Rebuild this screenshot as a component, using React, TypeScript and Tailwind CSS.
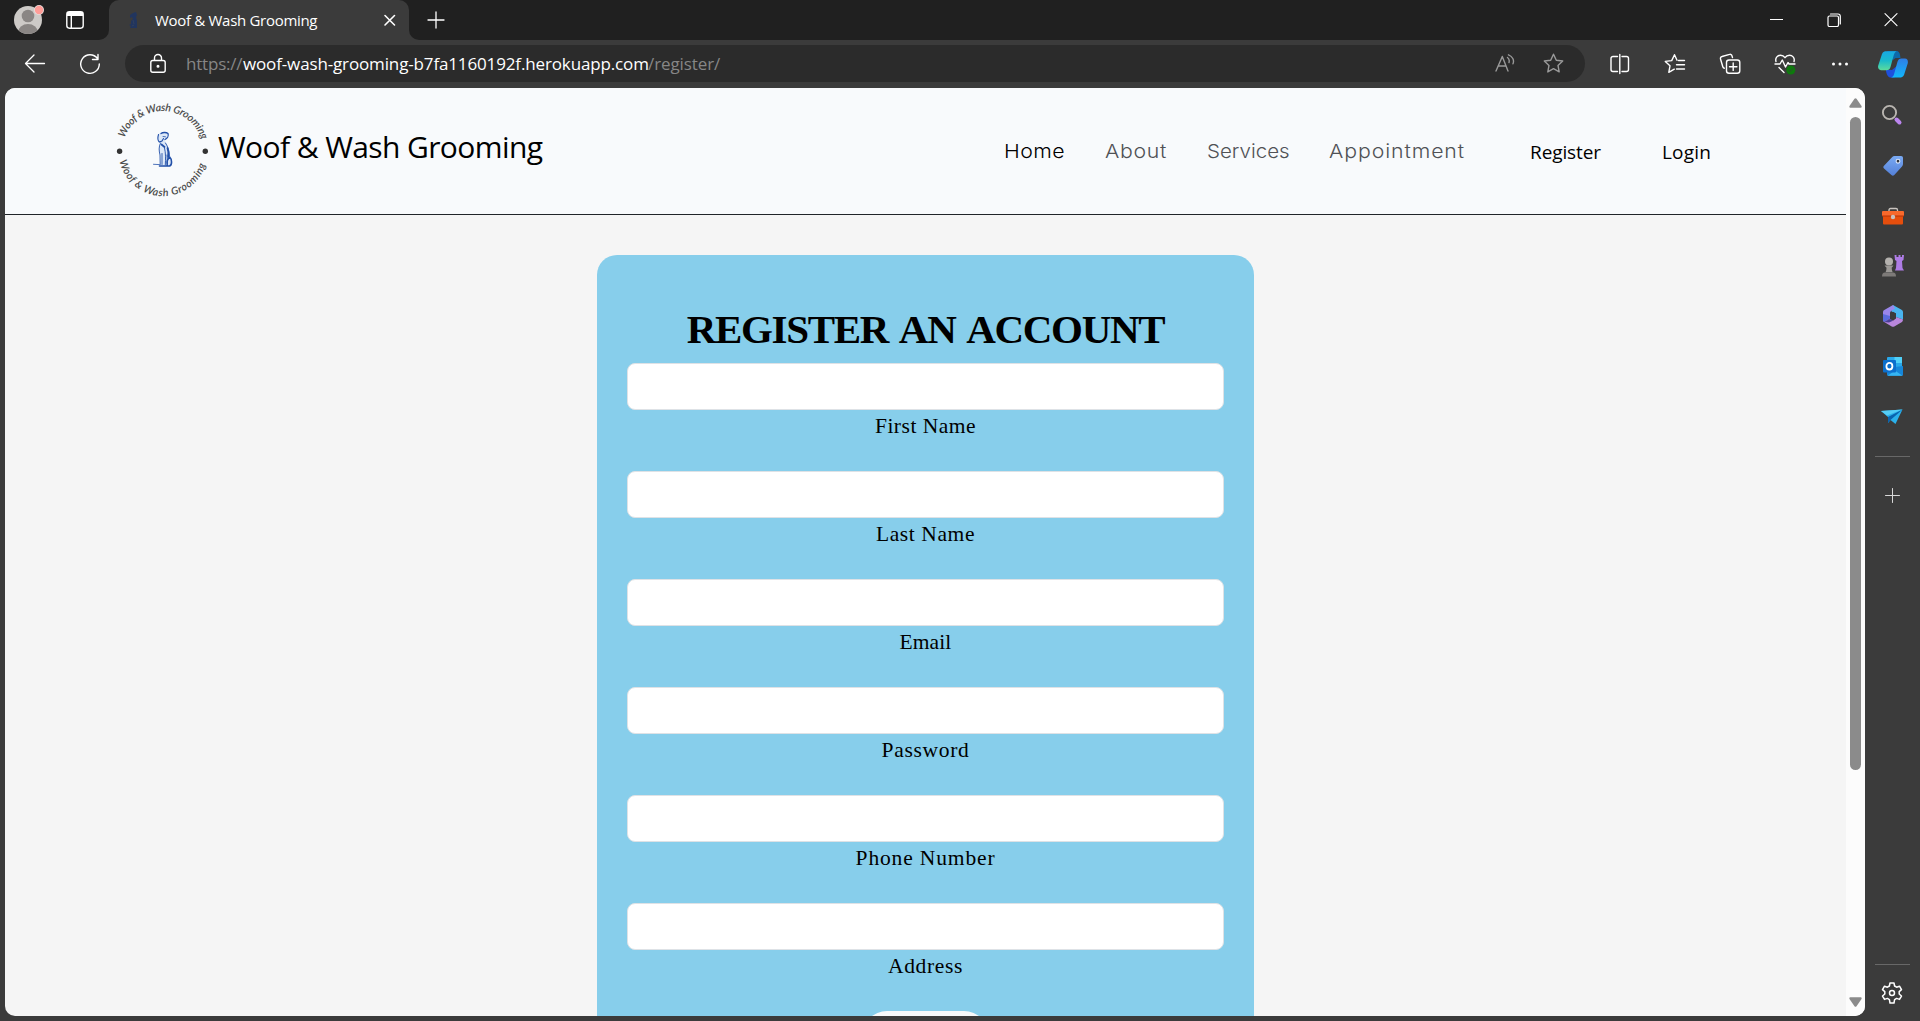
import React from 'react';

const fields = [
  { label: 'First Name', tracking: 'tracking-[0.5px]' },
  { label: 'Last Name', tracking: 'tracking-[0.6px]' },
  { label: 'Email', tracking: 'tracking-[0.1px]' },
  { label: 'Password', tracking: 'tracking-[0.7px]' },
  { label: 'Phone Number', tracking: 'tracking-[0.85px]' },
  { label: 'Address', tracking: 'tracking-[0.65px]' },
];

type P = { children?: React.ReactNode; className?: string };

function Glyph({ size, children, color = '#fff', sw = 1.4 }: P & { size: number; color?: string; sw?: number }) {
  return (
    <svg width={size} height={size} viewBox={`0 0 ${size} ${size}`} fill="none" stroke={color} strokeWidth={sw} strokeLinecap="round" strokeLinejoin="round">
      {children}
    </svg>
  );
}

function Cell({ children, className = '' }: P) {
  return <div className={`flex shrink-0 items-center justify-center ${className}`}>{children}</div>;
}

function TabStrip() {
  return (
    <div className="flex h-10 bg-[#202020]">
      <Cell className="w-14">
        <svg width="34" height="34" viewBox="11 3 34 34">
          <defs><clipPath id="face"><circle cx="28" cy="20" r="14" /></clipPath></defs>
          <circle cx="28" cy="20" r="14" fill="#cdcac7" />
          <g clipPath="url(#face)" fill="#8a8684">
            <circle cx="28" cy="16" r="6.3" />
            <ellipse cx="28" cy="32.5" rx="10" ry="8.5" />
          </g>
          <circle cx="39" cy="10" r="5" fill="#e8dedd" />
          <circle cx="39" cy="10" r="4.2" fill="#ff9c97" />
        </svg>
      </Cell>
      <Cell className="w-[38px]">
        <Glyph size={20}>
          <rect x="1.8" y="1.8" width="16.4" height="16.4" rx="2.6" />
          <path d="M2 4h16" strokeWidth="4" strokeLinecap="butt" />
          <path d="M6.3 6v12" />
        </Glyph>
      </Cell>
      <div className="flex w-[15px] flex-col bg-[#3b3b3b]"><div className="h-10 rounded-br-[10px] bg-[#202020]" /></div>
      <div className="flex bg-[#202020]">
        <div className="flex w-[300px] items-center rounded-t-[10px] bg-[#3b3b3b] pl-5">
          <svg width="9" height="17" viewBox="0 0 9 17" fill="#1d3565">
            <path d="M4 1l3-1 1 3-1 2 1 4v7H1l1-2-2-1 2-1V9l2-2-1-2-2 1V3z" opacity=".85" />
            <path d="M4 8l1 4M3 14l2-1" stroke="#31405c" />
          </svg>
          <span className="ml-[17px] w-[228px] whitespace-nowrap pb-[1px] font-['Open_Sans'] text-[15px] leading-5 tracking-[-0.3px] text-white">Woof &amp; Wash Grooming</span>
          <Glyph size={14} sw={1.6}><path d="M2 2.5l9.5 9.5M11.500 2.500L2 12" /></Glyph>
        </div>
      </div>
      <div className="w-[10px] bg-[#3b3b3b]"><div className="h-10 rounded-bl-[10px] bg-[#202020]" /></div>
      <Cell className="w-[33px] pb-[1px]"><Glyph size={18} sw={1.3}><path d="M9 1v16M1 9h16" /></Glyph></Cell>
      <div className="grow" />
      <Cell className="w-[57px] pb-[1px]"><svg width="13" height="13"><path d="M0 6.500h13" stroke="#fff" /></svg></Cell>
      <Cell className="w-[57px] pb-[1px]">
        <Glyph size={14} sw={1.2}><rect x="1" y="3" width="10.500" height="10.500" rx="1.500" /><path d="M3.500 1H11a2.300 2.300 0 0 1 2.300 2.300V11" /></Glyph>
      </Cell>
      <Cell className="w-[58px]"><Glyph size={14} sw={1.1}><path d="M1 .7l12 12M13 .7l-12 12" /></Glyph></Cell>
    </div>
  );
}

const star = 'M10.500 1.200l2.800 6 6.400.8-4.700 4.400 1.200 6.500-5.700-3.200-5.700 3.200L6 12.400 1.300 8l6.400-.8z';

function Toolbar() {
  return (
    <div className="flex h-12 items-center bg-[#3b3b3b] pb-[1px] pl-[7px]">
      <Cell className="w-14"><Glyph size={22} sw={1.3}><path d="M20.500 10.500H1.500M10 2L1.500 10.500l8.500 8.500" /></Glyph></Cell>
      <Cell className="w-[55px] pr-[1px]"><Glyph size={22} sw={1.4}><path d="M18.500 5.500A9.300 9.300 0 1 0 20.300 11M19 1.500v5h-5.500" /></Glyph></Cell>
      <div className="ml-[7px] flex h-[37px] w-[1460px] items-center rounded-full bg-[#2b2b2b] pl-[21px] pr-[6px]">
        <Cell className="w-6 pr-[1px]">
          <Glyph size={22} sw={1.4}><rect x="3.800" y="7.500" width="14.400" height="11.700" rx="2" /><path d="M7.500 7.200V5a3.500 3.500 0 0 1 7 0v2.200" /><circle cx="11" cy="13.200" r=".8" fill="#fff" /></Glyph>
        </Cell>
        <div className="ml-[15px] flex grow whitespace-nowrap pl-[1px] font-['Open_Sans'] text-[17px] leading-6">
          <span className="w-[57px] tracking-[-0.2px] text-[#868686]">https://</span>
          <span className="w-[405px] tracking-[-0.14px] text-white">woof-wash-grooming-b7fa1160192f.herokuapp.com</span>
          <span className="tracking-[-0.1px] text-[#868686]">/register/</span>
        </div>
        <Cell className="w-[49px]">
          <Glyph size={20} color="#9a9a9a"><path d="M1 17L7.300 2.500 13 17M3.200 12h7.700M12.500 3.500c1.500 1 2 3 1.500 5M13.500.8c4 1.500 6 5.500 4.500 9" /></Glyph>
        </Cell>
        <Cell className="w-[50px] pr-[2px]"><Glyph size={21} color="#9a9a9a"><path d={star} /></Glyph></Cell>
      </div>
      <div className="w-[7px]" />
      <Cell className="w-[55px]">
        <Glyph size={22} sw={1.400}><path d="M8.500 3.500H4a2 2 0 0 0-2 2v11a2 2 0 0 0 2 2h4.500M13 3.500h4.500a2 2 0 0 1 2 2v11a2 2 0 0 1-2 2H13M10.800 1.500v19" /></Glyph>
      </Cell>
      <Cell className="w-[55px]">
        <Glyph size={22} sw={1.400}><path d="M13 7.200L10.500 1.700 7.700 7.600 1.300 8.400 6 12.800l-1.200 6.500 5.500-3.100M14.500 7.500h6M12.500 11.700h8M12.500 16h8" /></Glyph>
      </Cell>
      <Cell className="w-[55px]">
        <Glyph size={22} sw={1.400}><rect x="7.500" y="7" width="13.300" height="13.300" rx="2.500" /><path d="M14.200 10v7.400M10.500 13.700h7.400M13.500 4.500l-.6-1.900a1.800 1.800 0 0 0-2.300-1.200L3 3.500a2 2 0 0 0-1.500 2.500l2.300 7.800a2 2 0 0 0 1.500 1.400" /></Glyph>
      </Cell>
      <Cell className="w-[55px]">
        <Glyph size={22} sw={1.400}>
          <path d="M2 8.500C.8 4.500 4 2.200 6.500 2.200c2 0 3.500 1 4.500 2.500 1-1.500 2.500-2.500 4.500-2.500 2.500 0 5.700 2.300 4.500 6.300M1 11h5l2.300-4 3.200 7 2.500-4.500 1 1.500h6M5 14.500l5 5" />
          <circle cx="16.800" cy="17" r="4.500" fill="#0e7a0d" stroke="none" />
          <path d="M14.800 17.200l1.400 1.400 2.600-2.900" stroke="#2d4f2d" strokeWidth="1" />
        </Glyph>
      </Cell>
      <Cell className="w-[55px]">
        <svg width="18" height="6" fill="#fff"><circle cx="2.500" cy="3" r="1.500" /><circle cx="9" cy="3" r="1.500" /><circle cx="15.500" cy="3" r="1.500" /></svg>
      </Cell>
      <Cell className="w-[51px] pt-[1px]">
        <svg width="30" height="27" viewBox="0 0 30 27">
          <defs>
            <linearGradient id="cpA" x1="0" y1="0" x2="0" y2="1"><stop stopColor="#18a8e2" /><stop offset=".5" stopColor="#1abacb" /><stop offset="1" stopColor="#5cdb9c" /></linearGradient>
            <linearGradient id="cpB" x1="0" y1="0" x2="0" y2="1"><stop stopColor="#2f7ee6" /><stop offset="1" stopColor="#12b6fb" /></linearGradient>
          </defs>
          <path d="M14 19l-6-.5c0 3 1 7 4 8h4.500l4-13z" fill="#1e50dc" />
          <path d="M9 0h9.500c2.500 0 3.500 2 4 7h-5L15 9z" fill="#0d69a9" />
          <path d="M4 3C5 .8 6.500.3 8.500.3h10C17 .8 16 3 15.500 5l-3 11c-.7 2.500-2 3.200-4 3.200H3c-2.500 0-3.500-2.500-2.700-5z" fill="url(#cpA)" />
          <path d="M26 24c-1 2.200-2.500 2.500-4.500 2.500h-8.500c2.500-.5 2.800-2.500 3.400-4.500l3-11c.7-2.500 2-3.500 4-3.500H27c2.500 0 3.300 2.500 2.700 5z" fill="url(#cpB)" />
        </svg>
      </Cell>
    </div>
  );
}

function Logo() {
  return (
    <svg width="104" height="106" viewBox="0 0 104 106">
      <defs>
        <path id="arcTop" d="M12.500 41 A40.500 40.500 0 0 1 89 41.500" />
        <path id="arcBottom" d="M7.500 64 A44.500 44.500 0 0 0 94.500 64" />
      </defs>
      <g fill="#4a4a4a" fontFamily="Lato" fontStyle="italic" fontWeight="600" fontSize="10.500">
        <text textLength="101" lengthAdjust="spacing"><textPath href="#arcTop">Woof &amp; Wash Grooming</textPath></text>
        <text textLength="117" lengthAdjust="spacing"><textPath href="#arcBottom">Woof &amp; Wash Grooming</textPath></text>
      </g>
      <circle cx="7.600" cy="54.300" r="2.700" fill="#333" />
      <circle cx="93.300" cy="54.300" r="2.700" fill="#333" />
      <path d="M47 36.500c2-1.500 6-2 8-.7 1.700 1 1.500 4-.5 5.500-1.500 1-1.500 2.500-.8 4 2.500 4 4.300 8 4 13 1.300 1.200 2.600 3 2.300 6.500-.2 3-1.500 5-3.500 5L48 69.500c-1-.5-.8-2 .3-2.500.5-4 .3-8-1-13-.5-3 .2-6 1-8.500l-2-1.200c-1-1.700-1.500-5 .7-7.800z" fill="#dde8f8" />
      <g fill="none" stroke="#2350a8" strokeLinecap="round">
        <path d="M46.500 37.500c-1 3.500-1 6 .8 7.500l2.700-1 1.500-2.500" strokeWidth="1.100" />
        <path d="M49 36.500c2-1.500 5.500-1.200 7 0 1 2.500-1 5-3 6" strokeWidth="1.300" />
        <path d="M48.500 46c-2 4-1.500 8-.5 12l.2 9.500M53.500 46c2.500 4 4 8 4 13.500M52.500 51c1.300 5 1.200 11 .8 17M50 56.500v11M55 58l.5 9" strokeWidth=".9" />
        <path d="M55.500 51c1 3 1.200 6 .7 9M49.500 47.500l3 2.500" strokeWidth="1.800" />
        <path d="M47.500 69h10c3-1 2.300-7 .5-8.500-2.300 1-3.500 4-2.800 8" strokeWidth="1.600" />
        <path d="M41.500 67.300l6 .3M51 39.500l2.500.3" strokeWidth=".8" />
      </g>
    </svg>
  );
}

function SiteHeader() {
  return (
    <header className="flex h-[127px] items-center border-b border-[#212529] bg-[#f8fafc] pl-[107px]">
      <div className="pb-[2px]"><Logo /></div>
      <div className="ml-[2px] w-[786px] whitespace-nowrap pb-[8px] font-['Open_Sans'] text-[30px] leading-9 tracking-[-0.6px] text-black">Woof &amp; Wash Grooming</div>
      <nav className="flex whitespace-nowrap pt-[2px] font-['Inter'] text-[19px] font-light leading-6 text-[#505256]">
        <a className="w-[101px] origin-left scale-x-[1.12] tracking-[0.4px] text-black">Home</a>
        <a className="w-[102px] origin-left scale-x-[1.12] tracking-[0.6px]">About</a>
        <a className="w-[122px] origin-left scale-x-[1.08] tracking-[0px]">Services</a>
        <a className="w-[201px] origin-left scale-x-[1.12] tracking-[0.8px]">Appointment</a>
      </nav>
      <div className="flex whitespace-nowrap pt-[2px] font-['Open_Sans'] text-[19px] leading-6 text-black">
        <a className="w-[132px] tracking-[-0.1px]">Register</a>
        <a className="tracking-[0.200px]">Login</a>
      </div>
    </header>
  );
}

function RegisterCard() {
  return (
    <section className="mx-auto mt-10 w-[657px] rounded-t-[20px] bg-[#87ceeb] px-[30px] pt-[30px] text-center font-['Liberation_Serif'] text-black">
      <h1 className="h-[78px] whitespace-nowrap pt-[10px] text-[41px] font-bold leading-[68px] tracking-[-1.3px] [word-spacing:4px]">REGISTER AN ACCOUNT</h1>
      {fields.map((f) => (
        <label key={f.label} className="block h-[108px]">
          <input className="block h-[47px] w-full rounded-[8px] border border-[#dee2e6] bg-white" />
          <span className={`block text-[21.5px] leading-[33px] ${f.tracking}`}>{f.label}</span>
        </label>
      ))}
      <button className="mx-auto block h-[50px] w-[127px] rounded-full bg-[#f8f9fa]" />
    </section>
  );
}

function Scrollbar() {
  return (
    <div className="flex w-[19px] shrink-0 flex-col items-center bg-[#fcfcfc] pt-[10px]">
      <svg width="13" height="10" fill="#8b8b8b"><path d="M5.500.8q1-1.200 2 0l5 7.200q.6 1.500-.8 1.800H1.300Q-.1 9.500.5 8z" /></svg>
      <div className="mt-[9px] h-[653px] w-[11px] rounded-full bg-[#8b8b8b]" />
      <svg className="mt-[227px]" width="13" height="10" fill="#8b8b8b"><path d="M5.500 9.200q1 1.200 2 0l5-7.200q.6-1.500-.8-1.800H1.300Q-.1.5.5 2z" /></svg>
    </div>
  );
}

function Sidebar() {
  return (
    <aside className="flex w-[55px] shrink-0 flex-col items-center">
      <Cell className="mt-[2px] h-[49px] pr-[1px]">
        <svg width="22" height="22" viewBox="0 0 22 22"><circle cx="8.500" cy="8.500" r="6.600" fill="none" stroke="#b9b5b0" strokeWidth="1.900" /><path d="M15.500 15.500l3 3" stroke="#bb85ee" strokeWidth="4" strokeLinecap="round" /></svg>
      </Cell>
      <Cell className="h-[53px] pt-[1px]">
        <svg width="22" height="22" viewBox="0 0 22 22"><defs><linearGradient id="tg" x1="0" y1="0" x2="0" y2="1"><stop stopColor="#7aaaf3" /><stop offset="1" stopColor="#5480d8" /></linearGradient></defs><path d="M12.500 1h6.500c1.300 0 2 .7 2 2v6c0 1-.3 1.700-1 2.400l-7.700 8.600c-1 1-1.900 1-2.900 0L2 13.500c-.9-1-.9-1.900 0-2.800L10.300 2c.6-.7 1.300-1 2.200-1z" fill="url(#tg)" /><circle cx="16" cy="6.200" r="1.900" fill="#31363f" stroke="#dde8fa" strokeWidth="1.100" /></svg>
      </Cell>
      <Cell className="h-[49px] pb-[1px]">
        <svg width="22" height="18" viewBox="0 0 22 18"><path d="M7 4.500V3q0-1.500 1.500-1.500h5.500Q15.500 1.500 15.500 3v1.500" fill="none" stroke="#c9c4bf" strokeWidth="1.300" /><rect x="1" y="8" width="20" height="9.500" rx="1" fill="#e54e0d" /><path d="M0 5q0-1 1-1h20q1 0 1 1v4H0z" fill="#f7692c" /><path d="M0 9h22" stroke="#b53306" /><circle cx="11" cy="10" r="2.200" fill="#c9c2be" /></svg>
      </Cell>
      <Cell className="h-[50px]">
        <svg width="22" height="22" viewBox="0 0 22 22"><path d="M12.500 0h2v2h2V0h2v2h1.500V0h2l-.5 5-1.500 1 .5 7 1.500 2.500h-9L14 13l.5-7-1.500-1z" fill="#ae7ce5" /><circle cx="7" cy="6.500" r="4" fill="#b4b1ae" /><path d="M2.500 10.500h9l-1.800 2.300c0 2 .5 3 1 4.500H3.500c.7-1.500 1-2.500 1-4.500z" fill="#9c9996" /><path d="M0 21.500q0-4 3-4h8q3 0 3 4z" fill="#7d7a78" /></svg>
      </Cell>
      <Cell className="h-[50px]">
        <svg width="20" height="22" viewBox="0 0 20 22">
          <path d="M10 0l8.500 4.700Q20 5.600 20 7v7.500L13 12V8.500L8.500 6.500V5z" fill="#49b4ef" />
          <path d="M10 0L1.300 5Q0 5.700 0 7v8q0 1.300 1.200 2L7 13.500V8q0-1.500 1.500-2.200L12 3.500z" fill="#9a86ea" />
          <path d="M0 9l7 2v2.500L1.200 17Q0 16.300 0 15z" fill="#5b6bdc" />
          <path d="M1.200 17L8.700 21.500q1.300.7 2.600 0L19 17q1-.7 1-2.500L13 12v1.500l-3 2.200-3-1.700z" fill="#b987dc" />
          <path d="M7 14l3 1.800L6 17.500 1.200 17z" fill="#4a3f96" />
          <path d="M10 6.800l3 1.800v4.200l-3 1.900-3-1.900V8.600z" fill="#3b3b3b" />
        </svg>
      </Cell>
      <Cell className="h-[50px]">
        <svg width="20" height="20" viewBox="0 0 20 20"><rect x="4" y="1" width="15" height="17" rx="1" fill="#29a8ea" /><path d="M11.500 1H19v6h-7.500z" fill="#50d0f8" /><path d="M4 12l16-2v9q0 .7-1 .7H5q-1 0-1-1z" fill="#1686d9" /><path d="M4.500 19.700L12 14.500l7.500 5.200z" fill="#36b5f2" /><rect x="0" y="4" width="13" height="12.500" rx="1" fill="#0c6fcd" /><ellipse cx="6.400" cy="10.200" rx="3" ry="3.300" fill="none" stroke="#fff" strokeWidth="1.800" /></svg>
      </Cell>
      <Cell className="h-[50px] pr-[1px] pt-[1px]">
        <svg width="22" height="16" viewBox="0 0 22 16"><path d="M0 2L21.500.5 14.500 15 9.500 11 7 14V8z" fill="#2bb0ea" /><path d="M7 8L21.500.5l-12 10.500L7 14z" fill="#0a63ae" /><path d="M0 2L21.500.5 6 6.500z" fill="#55cdf5" /></svg>
      </Cell>
      <div className="mt-[15px] h-px w-[35px] bg-[#686868]" />
      <Cell className="mt-[31px] h-[15px] pr-[1px]"><Glyph size={15} color="#d8d8d8" sw={1}><path d="M7.500.5v14M.5 7.500h14" /></Glyph></Cell>
      <div className="grow" />
      <div className="h-px w-[35px] bg-[#686868]" />
      <Cell className="mb-[12px] mt-[16px] h-[23px] pr-[1px]">
        <svg width="22" height="22" viewBox="0 0 22 22" fill="none" stroke="#fff" strokeWidth="1.500" strokeLinejoin="round"><path d="M9 1h4l.6 3 2 1.200 2.900-1 2 3.400-2.300 2v2.400l2.300 2-2 3.400-2.900-1-2 1.200L13 21H9l-.6-3.400-2-1.200-2.900 1-2-3.400 2.300-2V9.600l-2.300-2 2-3.400 2.900 1 2-1.200z" /><circle cx="11" cy="11" r="2.500" /></svg>
      </Cell>
    </aside>
  );
}

export default function App() {
  return (
    <div className="flex h-[1021px] w-[1920px] flex-col overflow-hidden bg-[#3b3b3b]">
      <TabStrip />
      <Toolbar />
      <div className="flex h-[928px] pl-[5px]">
        <main className="flex w-[1860px] overflow-hidden rounded-[10px] bg-[#f5f5f5]">
          <div className="h-full w-[1841px] overflow-hidden">
            <SiteHeader />
            <RegisterCard />
          </div>
          <Scrollbar />
        </main>
        <Sidebar />
      </div>
    </div>
  );
}
